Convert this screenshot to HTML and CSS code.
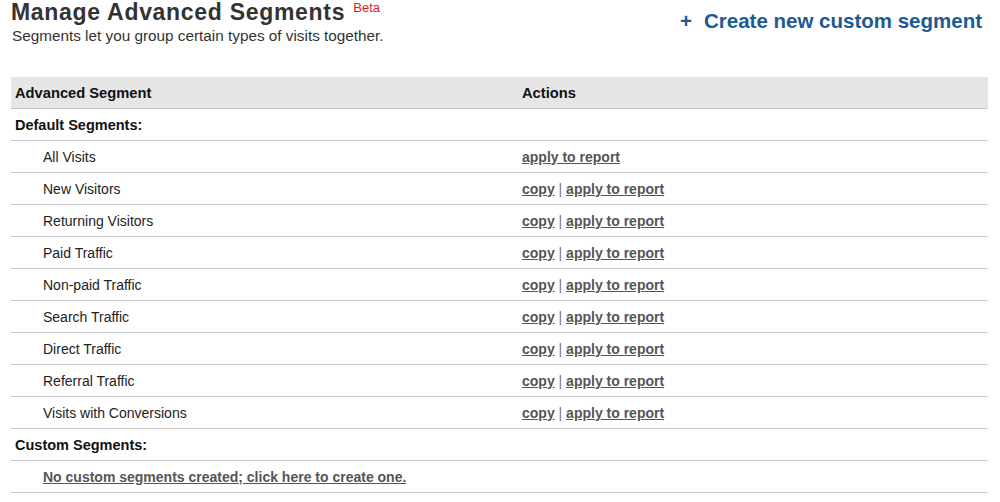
FILE: index.html
```html
<!DOCTYPE html>
<html>
<head>
<meta charset="utf-8">
<link rel="stylesheet" href="styles.css">
</head>
<body>
<div class="page">
  <div class="top">
    <div class="heading">
      <h1 class="title">Manage Advanced Segments <sup class="beta">Beta</sup></h1>
      <p class="subtitle">Segments let you group certain types of visits together.</p>
    </div>
    <a class="create" href="#"><span class="plus">+</span>Create new custom segment</a>
  </div>
  <table class="grid">
    <thead>
      <tr><th class="c1">Advanced Segment</th><th class="c2">Actions</th></tr>
    </thead>
    <tbody>
      <tr class="section"><td colspan="2">Default Segments:</td></tr>
      <tr><td class="name">All Visits</td><td class="act"><a href="#">apply to report</a></td></tr>
      <tr><td class="name">New Visitors</td><td class="act"><a href="#">copy</a> | <a href="#">apply to report</a></td></tr>
      <tr><td class="name">Returning Visitors</td><td class="act"><a href="#">copy</a> | <a href="#">apply to report</a></td></tr>
      <tr><td class="name">Paid Traffic</td><td class="act"><a href="#">copy</a> | <a href="#">apply to report</a></td></tr>
      <tr><td class="name">Non-paid Traffic</td><td class="act"><a href="#">copy</a> | <a href="#">apply to report</a></td></tr>
      <tr><td class="name">Search Traffic</td><td class="act"><a href="#">copy</a> | <a href="#">apply to report</a></td></tr>
      <tr><td class="name">Direct Traffic</td><td class="act"><a href="#">copy</a> | <a href="#">apply to report</a></td></tr>
      <tr><td class="name">Referral Traffic</td><td class="act"><a href="#">copy</a> | <a href="#">apply to report</a></td></tr>
      <tr><td class="name">Visits with Conversions</td><td class="act"><a href="#">copy</a> | <a href="#">apply to report</a></td></tr>
      <tr class="section"><td colspan="2">Custom Segments:</td></tr>
      <tr><td class="name" colspan="2"><a href="#">No custom segments created; click here to create one.</a></td></tr>
    </tbody>
  </table>
</div>
</body>
</html>
```

FILE: styles.css
```css
html, body {
  margin: 0;
  padding: 0;
  background: #fff;
}
body {
  font-family: "Liberation Sans", Arial, sans-serif;
  color: #222;
}
.page {
  padding: 0 12px 0 11px;
}
.top {
  display: flex;
  justify-content: space-between;
  align-items: flex-start;
  height: 77px;
}
.title {
  margin: 0;
  padding-top: 0;
  font-size: 23px;
  letter-spacing: 0.7px;
  font-weight: bold;
  color: #333;
  line-height: 25px;
}
.beta {
  font-size: 13px;
  letter-spacing: 0;
  font-weight: normal;
  color: #e01b1b;
  vertical-align: top;
  position: relative;
  top: -5px;
  margin-left: 1px;
}
.subtitle {
  margin: 2px 0 0 1px;
  font-size: 15.3px;
  line-height: 18px;
  color: #333;
}
.create {
  margin-top: 9px;
  margin-right: 6px;
  font-size: 20.5px;
  font-weight: bold;
  color: #1c5a94;
  text-decoration: none;
}
.plus {
  margin-right: 12px;
}
.grid {
  width: 977px;
  border-collapse: collapse;
  font-size: 14px;
}
.grid th {
  background: #e6e6e6;
  text-align: left;
  font-weight: bold;
  font-size: 14.7px;
  color: #111;
  height: 31px;
  padding: 0;
  border-bottom: 1px solid #c4c4c4;
}
.grid th.c1 {
  padding-left: 4px;
  width: 507px;
}
.grid td {
  height: 31px;
  padding: 0;
  border-bottom: 1px solid #c8c8c8;
  color: #222;
}
.section td {
  font-weight: bold;
  font-size: 14.5px;
  padding-left: 4px;
  color: #111;
}
.grid td.name {
  padding-left: 32px;
}
.grid td.act {
  color: #777;
}
.grid a {
  color: #555;
  font-weight: bold;
  text-decoration: underline;
}
```
